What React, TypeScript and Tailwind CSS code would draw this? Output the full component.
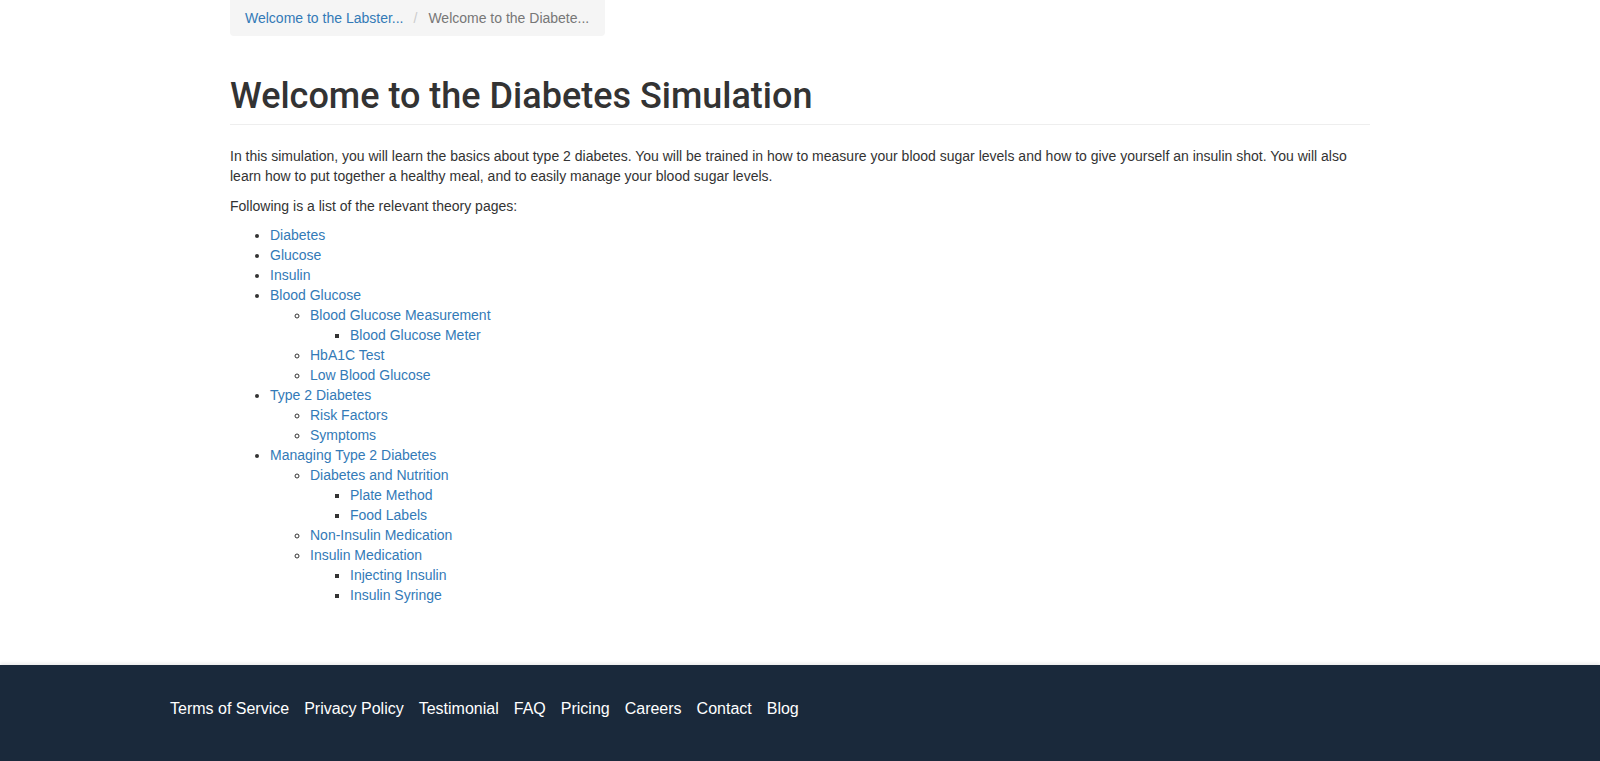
import React from "react";

type Item = { label: string; children?: Item[] };

const items: Item[] = [
  { label: "Diabetes" },
  { label: "Glucose" },
  { label: "Insulin" },
  {
    label: "Blood Glucose",
    children: [
      { label: "Blood Glucose Measurement", children: [{ label: "Blood Glucose Meter" }] },
      { label: "HbA1C Test" },
      { label: "Low Blood Glucose" },
    ],
  },
  {
    label: "Type 2 Diabetes",
    children: [{ label: "Risk Factors" }, { label: "Symptoms" }],
  },
  {
    label: "Managing Type 2 Diabetes",
    children: [
      {
        label: "Diabetes and Nutrition",
        children: [{ label: "Plate Method" }, { label: "Food Labels" }],
      },
      { label: "Non-Insulin Medication" },
      {
        label: "Insulin Medication",
        children: [{ label: "Injecting Insulin" }, { label: "Insulin Syringe" }],
      },
    ],
  },
];

function List({ data, level }: { data: Item[]; level: number }) {
  const cls =
    level === 0 ? "list-disc" : level === 1 ? "list-[circle]" : "list-[square]";
  return (
    <ul className={`${cls} pl-10 m-0`}>
      {data.map((it) => (
        <li key={it.label}>
          <a href="#" className="text-[#337ab7] no-underline">
            {it.label}
          </a>
          {it.children && <List data={it.children} level={level + 1} />}
        </li>
      ))}
    </ul>
  );
}

const footerLinks = [
  "Terms of Service",
  "Privacy Policy",
  "Testimonial",
  "FAQ",
  "Pricing",
  "Careers",
  "Contact",
  "Blog",
];

export default function App() {
  return (
    <div
      className="min-h-screen bg-white text-[#333] text-[14px] leading-[20px]"
      style={{ fontFamily: '"Liberation Sans", Arial, Helvetica, sans-serif' }}
    >
      <div className="w-[1140px] mx-auto">
        <div className="flex items-center h-[36px] px-[15px] bg-[#f5f5f5] rounded-b-[4px] w-[375px]">
          <a href="#" className="text-[#337ab7] whitespace-nowrap">
            Welcome to the Labster...
          </a>
          <span className="text-[#ccc] pl-[10px] pr-[11px]">/</span>
          <span className="text-[#777] whitespace-nowrap">Welcome to the Diabete...</span>
        </div>
        <h1
          className="mt-[40px] text-[36px] leading-[40px] font-medium pb-[8px] border-b border-[#eee] text-[#333]"
          style={{ fontFamily: 'Roboto, "Liberation Sans", Arial, sans-serif' }}
        >
          Welcome to the Diabetes Simulation
        </h1>
        <p className="mt-[21px] mb-[10px]">
          In this simulation, you will learn the basics about type 2 diabetes. You will be
          trained in how to measure your blood sugar levels and how to give yourself an insulin
          shot. You will also learn how to put together a healthy meal, and to easily manage
          your blood sugar levels.
        </p>
        <p className="mb-[9px]">Following is a list of the relevant theory pages:</p>
        <List data={items} level={0} />
      </div>
      <footer className="mt-[60px] bg-[#1a293b] h-[110px] shadow-[0_-2px_3px_rgba(0,0,0,0.08)]">
        <div className="w-[1260px] mx-auto pt-[33px] flex gap-[15px] text-white text-[16px] leading-[22px]">
          {footerLinks.map((l) => (
            <a key={l} href="#" className="text-white">
              {l}
            </a>
          ))}
        </div>
      </footer>
    </div>
  );
}
